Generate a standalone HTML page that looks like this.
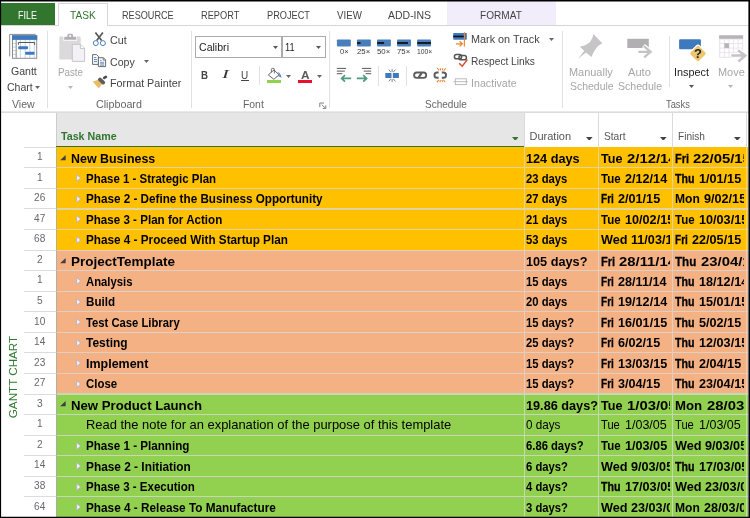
<!DOCTYPE html>
<html><head><meta charset="utf-8"><title>Project</title>
<style>
html,body{margin:0;padding:0;background:#fff;}
body{width:750px;height:518px;position:relative;overflow:hidden;font-family:"Liberation Sans",sans-serif;}
.t{position:absolute;white-space:nowrap;transform-origin:left center;}
.r{position:absolute;}
.c{position:absolute;overflow:hidden;}
#all{position:absolute;left:0;top:0;width:750px;height:518px;will-change:transform;}
</style></head><body><div id="all">
<div class="r" style="left:0px;top:0px;width:750px;height:518px;background:#fff;"></div>
<div class="r" style="left:1px;top:3px;width:54px;height:23px;background:#31752f;"></div>
<div class="t" style="left:18.30px;top:7.83px;font-size:11.8px;line-height:14.16px;color:#fff;transform:scaleX(0.7624);">FILE</div>
<div class="r" style="left:447px;top:1px;width:109px;height:24px;background:#f2edfa;"></div>
<div class="r" style="left:1px;top:25px;width:748px;height:1px;background:#d6d6d6;"></div>
<div class="r" style="left:58px;top:3px;width:50px;height:23px;background:#fff;border:1px solid #d6d6d6;border-bottom:none;box-sizing:border-box"></div>
<div class="t" style="left:70.30px;top:7.83px;font-size:11.8px;line-height:14.16px;color:#31752f;transform:scaleX(0.8582);">TASK</div>
<div class="t" style="left:122.30px;top:7.83px;font-size:11.8px;line-height:14.16px;color:#444;transform:scaleX(0.7730);">RESOURCE</div>
<div class="t" style="left:201.00px;top:7.83px;font-size:11.8px;line-height:14.16px;color:#444;transform:scaleX(0.7823);">REPORT</div>
<div class="t" style="left:266.50px;top:7.83px;font-size:11.8px;line-height:14.16px;color:#444;transform:scaleX(0.7808);">PROJECT</div>
<div class="t" style="left:336.80px;top:7.83px;font-size:11.8px;line-height:14.16px;color:#444;transform:scaleX(0.8224);">VIEW</div>
<div class="t" style="left:387.60px;top:7.83px;font-size:11.8px;line-height:14.16px;color:#444;transform:scaleX(0.8884);">ADD-INS</div>
<div class="t" style="left:479.80px;top:7.83px;font-size:11.8px;line-height:14.16px;color:#444;transform:scaleX(0.8541);">FORMAT</div>
<div class="r" style="left:1px;top:111px;width:748px;height:1px;background:#e9e9e9;"></div>
<div class="r" style="left:47px;top:31px;width:1px;height:77px;background:#e1e1e1;"></div>
<div class="r" style="left:191px;top:31px;width:1px;height:77px;background:#e1e1e1;"></div>
<div class="r" style="left:329px;top:31px;width:1px;height:77px;background:#e1e1e1;"></div>
<div class="r" style="left:562px;top:31px;width:1px;height:77px;background:#e1e1e1;"></div>
<div class="r" style="left:669px;top:36px;width:1px;height:51px;background:#e1e1e1;"></div>
<div class="r" style="left:259px;top:66px;width:1px;height:19px;background:#e1e1e1;"></div>
<div class="r" style="left:378px;top:66px;width:1px;height:20px;background:#e1e1e1;"></div>
<div class="r" style="left:406px;top:66px;width:1px;height:20px;background:#e1e1e1;"></div>
<div class="t" style="left:10.70px;top:64.32px;font-size:11.6px;line-height:13.92px;color:#444;transform:scaleX(0.9094);">Gantt</div>
<div class="t" style="left:6.70px;top:79.72px;font-size:11.6px;line-height:13.92px;color:#444;transform:scaleX(0.9095);">Chart</div>
<svg class="r" style="left:35.00px;top:86.00px" width="5" height="3" viewBox="0 0 5 3"><path d="M0 0H5L2.5 3Z" fill="#666"/></svg>
<div class="t" style="left:12.00px;top:97.02px;font-size:11.6px;line-height:13.92px;color:#666;transform:scaleX(0.9104);">View</div>
<div class="t" style="left:58.00px;top:64.52px;font-size:11.6px;line-height:13.92px;color:#a6a6a6;transform:scaleX(0.8428);">Paste</div>
<svg class="r" style="left:68.00px;top:85.50px" width="5" height="3" viewBox="0 0 5 3"><path d="M0 0H5L2.5 3Z" fill="#b5b5b5"/></svg>
<div class="t" style="left:110.00px;top:33.02px;font-size:11.6px;line-height:13.92px;color:#444;transform:scaleX(0.9251);">Cut</div>
<div class="t" style="left:110.00px;top:54.92px;font-size:11.6px;line-height:13.92px;color:#444;transform:scaleX(0.9121);">Copy</div>
<svg class="r" style="left:143.70px;top:60.00px" width="5" height="3" viewBox="0 0 5 3"><path d="M0 0H5L2.5 3Z" fill="#666"/></svg>
<div class="t" style="left:110.00px;top:75.72px;font-size:11.6px;line-height:13.92px;color:#444;transform:scaleX(0.9294);">Format Painter</div>
<div class="t" style="left:96.00px;top:97.02px;font-size:11.6px;line-height:13.92px;color:#666;transform:scaleX(0.9244);">Clipboard</div>
<div class="r" style="left:195px;top:36px;width:87px;height:22px;border:1px solid #ababab;box-sizing:border-box;background:#fff"></div>
<div class="r" style="left:282px;top:36px;width:44px;height:22px;border:1px solid #ababab;box-sizing:border-box;background:#fff"></div>
<div class="t" style="left:198.60px;top:40.02px;font-size:11.6px;line-height:13.92px;color:#222;transform:scaleX(0.9125);">Calibri</div>
<svg class="r" style="left:273.00px;top:46.00px" width="5" height="3" viewBox="0 0 5 3"><path d="M0 0H5L2.5 3Z" fill="#555"/></svg>
<div class="t" style="left:285.00px;top:40.02px;font-size:11.6px;line-height:13.92px;color:#222;transform:scaleX(0.7972);">11</div>
<svg class="r" style="left:316.20px;top:46.00px" width="5" height="3" viewBox="0 0 5 3"><path d="M0 0H5L2.5 3Z" fill="#555"/></svg>
<div class="t" style="left:201.00px;top:68.52px;font-size:11.5px;line-height:13.80px;color:#444;font-weight:bold;transform:scaleX(0.8428);">B</div>
<div class="t" style="left:221.80px;top:67.28px;font-size:12.8px;line-height:15.36px;color:#333;font-style:italic;transform:scaleX(1.6310);font-family:'Liberation Serif',serif;">I</div>
<div class="t" style="left:241.40px;top:68.59px;font-size:11px;line-height:13.20px;color:#444;transform:scaleX(0.9063);">U</div>
<div class="r" style="left:241px;top:80px;width:8px;height:1px;background:#444;"></div>
<div class="r" style="left:266.5px;top:79.5px;width:14.5px;height:3.5px;background:#92d050;"></div>
<svg class="r" style="left:286.10px;top:74.80px" width="5" height="3" viewBox="0 0 5 3"><path d="M0 0H5L2.5 3Z" fill="#666"/></svg>
<div class="t" style="left:300.70px;top:68.32px;font-size:11.6px;line-height:13.92px;color:#5a5a5a;font-weight:bold;transform:scaleX(1.0266);">A</div>
<div class="r" style="left:297.5px;top:79.5px;width:14.5px;height:3.5px;background:#e8112d;"></div>
<svg class="r" style="left:317.00px;top:74.80px" width="5" height="3" viewBox="0 0 5 3"><path d="M0 0H5L2.5 3Z" fill="#666"/></svg>
<div class="t" style="left:242.60px;top:97.02px;font-size:11.6px;line-height:13.92px;color:#666;transform:scaleX(0.8961);">Font</div>
<div class="t" style="left:424.60px;top:97.02px;font-size:11.6px;line-height:13.92px;color:#666;transform:scaleX(0.8641);">Schedule</div>
<div class="t" style="left:665.90px;top:97.02px;font-size:11.6px;line-height:13.92px;color:#666;transform:scaleX(0.8027);">Tasks</div>
<div class="t" style="left:339.60px;top:48.17px;font-size:7.0px;line-height:8.40px;color:#3a3a3a;transform:scaleX(1.0775);">0×</div>
<div class="t" style="left:357.35px;top:48.17px;font-size:7.0px;line-height:8.40px;color:#3a3a3a;transform:scaleX(1.1116);">25×</div>
<div class="t" style="left:377.40px;top:48.17px;font-size:7.0px;line-height:8.40px;color:#3a3a3a;transform:scaleX(1.1116);">50×</div>
<div class="t" style="left:397.45px;top:48.17px;font-size:7.0px;line-height:8.40px;color:#3a3a3a;transform:scaleX(1.1116);">75×</div>
<div class="t" style="left:416.50px;top:48.17px;font-size:7.0px;line-height:8.40px;color:#3a3a3a;transform:scaleX(0.9640);">100×</div>
<svg class="r" style="left:0;top:0" width="750" height="60" viewBox="0 0 750 60"><rect x="336.90" y="39.5" width="13.9" height="6.9" rx="0.8" fill="#4a7ebb"/><rect x="356.95" y="39.5" width="13.9" height="6.9" rx="0.8" fill="#4a7ebb"/><rect x="357.05" y="42.05" width="3.5" height="1.85" fill="#151515"/><rect x="377.00" y="39.5" width="13.9" height="6.9" rx="0.8" fill="#4a7ebb"/><rect x="377.10" y="42.05" width="7" height="1.85" fill="#151515"/><rect x="397.05" y="39.5" width="13.9" height="6.9" rx="0.8" fill="#4a7ebb"/><rect x="397.15" y="42.05" width="10.8" height="1.85" fill="#151515"/><rect x="417.10" y="39.5" width="13.9" height="6.9" rx="0.8" fill="#4a7ebb"/><rect x="417.20" y="42.05" width="13.8" height="1.85" fill="#151515"/></svg>
<div class="t" style="left:471.30px;top:32.22px;font-size:11.6px;line-height:13.92px;color:#444;transform:scaleX(0.9348);">Mark on Track</div>
<svg class="r" style="left:548.70px;top:38.00px" width="5" height="3" viewBox="0 0 5 3"><path d="M0 0H5L2.5 3Z" fill="#666"/></svg>
<div class="t" style="left:471.30px;top:54.32px;font-size:11.6px;line-height:13.92px;color:#444;transform:scaleX(0.8770);">Respect Links</div>
<div class="t" style="left:471.30px;top:75.72px;font-size:11.6px;line-height:13.92px;color:#a6a6a6;transform:scaleX(0.9204);">Inactivate</div>
<div class="t" style="left:568.90px;top:64.72px;font-size:11.6px;line-height:13.92px;color:#a6a6a6;transform:scaleX(0.9435);">Manually</div>
<div class="t" style="left:569.60px;top:79.42px;font-size:11.6px;line-height:13.92px;color:#a6a6a6;transform:scaleX(0.9013);">Schedule</div>
<div class="t" style="left:628.40px;top:64.72px;font-size:11.6px;line-height:13.92px;color:#a6a6a6;transform:scaleX(0.9554);">Auto</div>
<div class="t" style="left:617.80px;top:79.42px;font-size:11.6px;line-height:13.92px;color:#a6a6a6;transform:scaleX(0.9117);">Schedule</div>
<div class="t" style="left:674.00px;top:64.72px;font-size:11.6px;line-height:13.92px;color:#222;transform:scaleX(0.9358);">Inspect</div>
<svg class="r" style="left:689.20px;top:84.50px" width="5" height="3" viewBox="0 0 5 3"><path d="M0 0H5L2.5 3Z" fill="#555"/></svg>
<div class="t" style="left:717.60px;top:64.72px;font-size:11.6px;line-height:13.92px;color:#a6a6a6;transform:scaleX(0.9448);">Move</div>
<svg class="r" style="left:727.80px;top:84.50px" width="5" height="3" viewBox="0 0 5 3"><path d="M0 0H5L2.5 3Z" fill="#b5b5b5"/></svg>
<svg class="r" style="left:0;top:0" width="750" height="112" viewBox="0 0 750 112">
<!-- Gantt chart icon -->
<g>
<path d="M9.7 56.5V34.4H35.6" fill="none" stroke="#8a8a8a" stroke-width="1"/>
<rect x="12.5" y="35.8" width="24.2" height="22.5" fill="#fff" stroke="#8c8c8c" stroke-width="1"/>
<rect x="12" y="35.3" width="25.2" height="4.6" fill="#3f79bd"/>
<g stroke="#b7cfea" stroke-width="0.9"><path d="M20.4 40V58M25.2 40V58M29.8 40V58M34.2 40V58"/><path d="M13 43.4H16M13 47.1H16M13 50.7H16M13 54.4H16"/></g>
<path d="M16.2 40V58" stroke="#9a9a9a" stroke-width="1.2"/>
<path d="M18.4 44.8V42.5H34.6V44.8" fill="none" stroke="#555" stroke-width="1"/>
<rect x="18.2" y="46.2" width="9.8" height="3" rx="0.8" fill="#3f79bd"/>
<rect x="25.2" y="51.7" width="9.3" height="3" rx="0.8" fill="#3f79bd"/>
</g>
<!-- Paste icon -->
<g>
<rect x="59.3" y="36.5" width="21.4" height="23.1" rx="1.2" fill="#dcd9dc"/>
<rect x="63.4" y="36" width="13.6" height="4.7" fill="#fff"/>
<path d="M64.2 39.8V37.4q0-.6.6-.6H67.3V35.5q0-1.8 1.6-1.8H71.5q1.6 0 1.6 1.8V36.8H75.7q.6 0 .6.6V39.8Z" fill="#b3b0b3"/>
<circle cx="70.2" cy="36" r="1.1" fill="#fff"/>
<path d="M72.3 44.3H80.6L84.6 48.3V61.4H72.3Z" fill="#f4f1f6" stroke="#c3bfc5" stroke-width="0.9"/>
<path d="M80.4 44.5V48.5H84.4" fill="#fff" stroke="#c3bfc5" stroke-width="0.9"/>
</g>
<!-- Scissors -->
<g fill="none">
<path d="M95.4 32.4L101.6 40.6M102.9 32.4L96.7 40.6" stroke="#585858" stroke-width="1.7"/>
<circle cx="95.8" cy="43.1" r="2.5" stroke="#3f79bd" stroke-width="0.95"/>
<circle cx="102.9" cy="43.1" r="2.5" stroke="#3f79bd" stroke-width="0.95"/>
</g>
<!-- Copy -->
<g>
<path d="M92.6 54.6H96.6L98.4 56.4V64.4H92.6Z" fill="#fff" stroke="#5a5a5a" stroke-width="0.9"/>
<path d="M94 57.6H96.4M94 59.6H97M94 61.6H97" stroke="#3f79bd" stroke-width="0.9"/>
<path d="M98.4 57.7H103.4L105.6 59.9V66.6H98.4Z" fill="#fff" stroke="#5a5a5a" stroke-width="0.9"/>
<path d="M103.2 57.9V60.1H105.4" fill="none" stroke="#5a5a5a" stroke-width="0.8"/>
<path d="M100 60.4H101.6M100 62.3H104.2M100 63.8H104.2M100 65.2H104.2" stroke="#3f79bd" stroke-width="0.8"/>
</g>
<!-- Format painter -->
<g>
<path d="M92.8 81.8L99.6 79L102.8 83.2L98.6 88.3Z" fill="#e9bb66"/>
<path d="M99.9 79.4L103.3 82.6" stroke="#5c5c5c" stroke-width="3.7" stroke-linecap="round"/>
<path d="M104.2 77.8L105.9 76.8" stroke="#4a4a4a" stroke-width="2.6" stroke-linecap="round"/>
</g>
<!-- fill bucket -->
<g>
<path d="M268.3 74.9L274 69.9L279 74.9L273.8 79.3Z" fill="#fff" stroke="#555" stroke-width="0.9" stroke-linejoin="round"/>
<path d="M271.4 72.2V69.2q0-.9 1.5-.9q1.5 0 1.5 .9V73.4" fill="none" stroke="#555" stroke-width="0.8"/>
<path d="M277.4 71.9q3.8 1.2 4 6.4q-1.6-2.6-3.2-1.2L279.6 74.9Z" fill="#3f79bd"/>
</g>
<!-- outdent / indent -->
<g stroke="#585858" stroke-width="1">
<path d="M336.8 68.4H346M336.8 71.1H344.8M336.8 73.7H342.4"/>
<path d="M362 68.4H371.2M363.7 71.1H371.2M365.6 73.7H371.2"/>
</g>
<g fill="none" stroke="#4e9b7e" stroke-width="1.7">
<path d="M351.2 78.4H341.6M345 75.2L341.6 78.4L345 81.7"/>
<path d="M356.8 78.4H366.6M363.2 75.2L366.6 78.4L363.2 81.7"/>
</g>
<!-- split -->
<g>
<rect x="385.3" y="72.9" width="6.2" height="5.1" rx="0.6" fill="#3f79bd"/>
<rect x="392.8" y="72.9" width="6.1" height="5.1" rx="0.6" fill="#3f79bd"/>
<path d="M392.1 72V69M390.9 72.2L388.8 69.6M393.3 72.2L395.4 69.6M392.1 79V82M390.9 78.8L388.8 81.4M393.3 78.8L395.4 81.4" stroke="#6e6e6e" stroke-width="0.85"/>
</g>
<!-- link -->
<g fill="none" stroke="#5c5c5c" stroke-width="1.8">
<rect x="414.1" y="72.5" width="12.1" height="5.3" rx="2.65"/>
<path d="M418.7 77.4L421.7 72.9" stroke-width="2.2"/>
</g>
<!-- unlink -->
<g fill="none">
<path d="M438.6 72.55H437.05a2.6 2.6 0 0 0 0 5.2H438.6M441.8 72.55H443.45a2.6 2.6 0 0 1 0 5.2H441.8" stroke="#5c5c5c" stroke-width="1.9"/>
<path d="M440.6 70.3L440.2 68M439.2 70.5L437.2 68.1M442.3 70.3L442.8 68.1M443.8 70.6L445.6 68.3M440.4 79.9L440 82.2M438.9 79.8L436.9 82.2M442 79.9L442.5 82.2M443.4 79.7L445.2 82.1" stroke="#f0852d" stroke-width="1.05"/>
</g>
<!-- mark on track -->
<g>
<rect x="453.2" y="32.9" width="13.6" height="6.8" rx="0.6" fill="#3f79bd"/>
<rect x="453.2" y="35.6" width="10.8" height="1.7" fill="#111"/>
<path d="M464.4 32.3V46.6" stroke="#f0852d" stroke-width="1.2"/>
<path d="M456 43.8H462M459.6 41.2L462.3 43.8L459.6 46.4" fill="none" stroke="#f0852d" stroke-width="1.3"/>
</g>
<!-- respect links -->
<g fill="none">
<rect x="454.4" y="54.6" width="7.2" height="4.2" rx="2.1" stroke="#555" stroke-width="1.5"/>
<rect x="459" y="55.6" width="7.4" height="4.2" rx="2.1" stroke="#555" stroke-width="1.5"/>
<path d="M459.2 63.2L462.2 66.2L467.4 59.6" stroke="#d8482a" stroke-width="1.5"/>
</g>
<!-- inactivate -->
<g fill="none" stroke="#b4b4b4" stroke-width="0.9">
<rect x="455.3" y="78.8" width="11" height="5.8"/>
<path d="M453.2 81.7H467.8"/>
</g>
<!-- pin -->
<path d="M593.4 34.1L602.3 43.2L598.6 45.5L595.6 48.9L593.1 53.3L591.5 56.9L586 52.6L578.2 58.7L584.2 50.8L579.9 46.7L585.2 45.2L590 42.2L592.3 38.1Z" fill="#c6c4c6"/>
<!-- auto schedule -->
<g>
<rect x="627.3" y="38.8" width="21.5" height="9.2" fill="#b1afb1"/>
<path d="M638 51.8H650M643.4 45.6L651 51.8L643.8 57.8" fill="none" stroke="#fff" stroke-width="4.4"/>
<path d="M638.4 51.8H650M643.8 46.2L650.6 51.8L644.2 57.4" fill="none" stroke="#c4c2c4" stroke-width="2.3"/>
</g>
<!-- inspect -->
<g>
<rect x="679.1" y="39.2" width="21.8" height="10.1" rx="1" fill="#3f79bd"/>
<rect x="-6.5" y="-6.5" width="13" height="13" rx="2.2" transform="translate(698 53.5) rotate(45)" fill="#ecc76f" stroke="#fff" stroke-width="1.2"/>
<text x="698" y="58.2" font-family="Liberation Sans, sans-serif" font-weight="bold" font-size="13" text-anchor="middle" fill="#222">?</text>
</g>
<!-- move -->
<g>
<rect x="719.1" y="35.3" width="24" height="22.6" fill="#e9e5ea"/>
<rect x="719.1" y="35.3" width="24" height="3.4" fill="#b6b4b6"/>
<g fill="#fff">
<rect x="720.3" y="39.6" width="3.6" height="3.4"/><rect x="724.9" y="39.6" width="3.6" height="3.4"/><rect x="729.5" y="39.6" width="3.6" height="3.4"/><rect x="734.1" y="39.6" width="3.6" height="3.4"/><rect x="738.7" y="39.6" width="3.6" height="3.4"/>
<rect x="720.3" y="44" width="3.6" height="3.6"/><rect x="729.5" y="44" width="3.6" height="3.6"/><rect x="734.1" y="44" width="3.6" height="3.6"/><rect x="738.7" y="44" width="3.6" height="3.6"/>
<rect x="720.3" y="48.6" width="3.6" height="3.6"/><rect x="724.9" y="48.6" width="3.6" height="3.6"/><rect x="729.5" y="48.6" width="3.6" height="3.6"/><rect x="734.1" y="48.6" width="3.6" height="3.6"/><rect x="738.7" y="48.6" width="3.6" height="3.6"/>
<rect x="720.3" y="53.2" width="3.6" height="3.6"/><rect x="724.9" y="53.2" width="3.6" height="3.6"/><rect x="729.5" y="53.2" width="3.6" height="3.6"/><rect x="734.1" y="53.2" width="3.6" height="3.6"/><rect x="738.7" y="53.2" width="3.6" height="3.6"/>
</g>
<rect x="724.4" y="43.3" width="4.6" height="4.8" fill="#b6b4b6"/>
<path d="M731 55.5H744M737.6 49.6L745.6 55.5L738 61.8" fill="none" stroke="#fff" stroke-width="4.6"/>
<path d="M731.3 55.5H744.4M738 50.2L745.2 55.5L738.4 61.4" fill="none" stroke="#c6c4c6" stroke-width="2.6"/>
</g>
<!-- dialog launcher -->
<g fill="none" stroke="#777" stroke-width="0.9">
<path d="M319.8 107.2V103H324"/>
<path d="M321.8 104.8L325.6 108.2M325.8 105.4V108.4H322.8"/>
</g>
</svg>

<div class="r" style="left:1px;top:112px;width:23px;height:405px;background:#fff;"></div>
<div class="r" style="left:56px;top:112px;width:468px;height:34px;background:#e6e6e6;"></div>
<div class="r" style="left:56px;top:112px;width:1px;height:34px;background:#cdcdcd;"></div>
<div class="r" style="left:56px;top:146px;width:468px;height:1.5px;background:#31752f;"></div>
<div class="r" style="left:524px;top:146.5px;width:224px;height:0.8000000000000114px;background:#c8c8c8;"></div>
<div class="t" style="left:61.00px;top:130.09px;font-size:11px;line-height:13.20px;color:#31752f;font-weight:bold;transform:scaleX(0.9708);">Task Name</div>
<div class="t" style="left:529.50px;top:130.09px;font-size:11px;line-height:13.20px;color:#555;">Duration</div>
<div class="t" style="left:603.50px;top:130.09px;font-size:11px;line-height:13.20px;color:#555;transform:scaleX(0.9255);">Start</div>
<div class="t" style="left:677.50px;top:130.09px;font-size:11px;line-height:13.20px;color:#555;transform:scaleX(0.9201);">Finish</div>
<svg class="r" style="left:511.90px;top:136.70px" width="6.6" height="3.8" viewBox="0 0 6.6 3.8"><path d="M0 0H6.6L3.3 3.8Z" fill="#31752f"/></svg>
<svg class="r" style="left:586.00px;top:136.70px" width="6.6" height="3.8" viewBox="0 0 6.6 3.8"><path d="M0 0H6.6L3.3 3.8Z" fill="#444"/></svg>
<svg class="r" style="left:660.00px;top:136.70px" width="6.6" height="3.8" viewBox="0 0 6.6 3.8"><path d="M0 0H6.6L3.3 3.8Z" fill="#444"/></svg>
<svg class="r" style="left:734.00px;top:136.70px" width="6.6" height="3.8" viewBox="0 0 6.6 3.8"><path d="M0 0H6.6L3.3 3.8Z" fill="#444"/></svg>
<div class="r" style="left:524px;top:112px;width:1px;height:35px;background:#dadada;"></div>
<div class="r" style="left:598px;top:112px;width:1px;height:35px;background:#dadada;"></div>
<div class="r" style="left:672px;top:112px;width:1px;height:35px;background:#dadada;"></div>
<div class="r" style="left:746px;top:112px;width:1px;height:35px;background:#dadada;"></div>
<div class="r" style="left:1px;top:112px;width:748px;height:1px;background:#dcdcdc;"></div>
<div class="r" style="left:56px;top:147.3px;width:692px;height:20.560000000000002px;background:#ffc000;"></div>
<div class="r" style="left:24px;top:146.8px;width:32px;height:1.0px;background:#dcdcdc;"></div>
<div class="r" style="left:524px;top:147.3px;width:1.2000000000000455px;height:20.560000000000002px;background:#e2d3a3;"></div>
<div class="r" style="left:598px;top:147.3px;width:1.2000000000000455px;height:20.560000000000002px;background:#e2d3a3;"></div>
<div class="r" style="left:672px;top:147.3px;width:1.2000000000000455px;height:20.560000000000002px;background:#e2d3a3;"></div>
<div class="r" style="left:746px;top:147.3px;width:1.2000000000000455px;height:20.560000000000002px;background:#e2d3a3;"></div>
<div class="t" style="left:36.79px;top:150.09px;font-size:11px;line-height:13.20px;color:#6a666c;transform:scaleX(0.9200);">1</div>
<svg class="r" style="left:60.3px;top:154.70px" width="6" height="6" viewBox="0 0 6 6"><path d="M5.7 0V5.2H0.1Z" fill="#3f3f4a"/></svg>
<div class="c" style="left:56px;top:147.30px;width:468px;height:20.56px;"><div class="t" style="left:14.900000000000006px;top:3.61px;font-size:13.3px;line-height:15.96px;color:#000;font-weight:bold;transform:scaleX(0.9347)">New Business</div></div>
<div class="c" style="left:525px;top:147.30px;width:73px;height:20.56px;"><div class="t" style="left:1.0px;top:3.61px;font-size:13.3px;line-height:15.96px;color:#000;font-weight:bold;transform:scaleX(0.9549)">124 days</div></div>
<div class="c" style="left:599px;top:147.30px;width:70.5px;height:20.56px;"><div class="t" style="left:2.10px;top:3.61px;font-size:13.3px;line-height:15.96px;color:#000;font-weight:bold;transform:scaleX(0.946);">Tue</div><div class="t" style="left:28.03px;top:3.61px;font-size:13.3px;line-height:15.96px;color:#000;font-weight:bold;transform:scaleX(1.117)">2/12/14</div></div>
<div class="c" style="left:673px;top:147.30px;width:70.79999999999995px;height:20.56px;"><div class="t" style="left:2.10px;top:3.61px;font-size:13.3px;line-height:15.96px;color:#000;font-weight:bold;transform:scaleX(0.829);-webkit-text-stroke:0.3px #000;">Fri</div><div class="t" style="left:20.48px;top:3.61px;font-size:13.3px;line-height:15.96px;color:#000;font-weight:bold;transform:scaleX(1.117)">22/05/15</div></div>
<div class="r" style="left:56px;top:167.86px;width:692px;height:20.559999999999974px;background:#ffc000;"></div>
<div class="r" style="left:24px;top:167.36px;width:32px;height:1.0px;background:#dcdcdc;"></div>
<div class="r" style="left:56px;top:167.26px;width:692px;height:1.200000000000017px;background:#e2d3a3;"></div>
<div class="r" style="left:524px;top:167.86px;width:1.2000000000000455px;height:20.559999999999974px;background:#e2d3a3;"></div>
<div class="r" style="left:598px;top:167.86px;width:1.2000000000000455px;height:20.559999999999974px;background:#e2d3a3;"></div>
<div class="r" style="left:672px;top:167.86px;width:1.2000000000000455px;height:20.559999999999974px;background:#e2d3a3;"></div>
<div class="r" style="left:746px;top:167.86px;width:1.2000000000000455px;height:20.559999999999974px;background:#e2d3a3;"></div>
<div class="t" style="left:36.79px;top:170.65px;font-size:11px;line-height:13.20px;color:#6a666c;transform:scaleX(0.9200);">1</div>
<svg class="r" style="left:75.6px;top:174.26px" width="6" height="8" viewBox="0 0 6 8"><path d="M0.7 0.6L4.6 4L0.7 7.4Z" fill="#f4f4fb" stroke="#a9a9c4" stroke-width="0.7"/></svg>
<div class="c" style="left:56px;top:167.86px;width:468px;height:20.56px;"><div class="t" style="left:29.5px;top:3.86px;font-size:12.4px;line-height:14.88px;color:#000;font-weight:bold;transform:scaleX(0.9255)">Phase 1 - Strategic Plan</div></div>
<div class="c" style="left:525px;top:167.86px;width:73px;height:20.56px;"><div class="t" style="left:1.3px;top:3.86px;font-size:12.4px;line-height:14.88px;color:#000;font-weight:bold;transform:scaleX(0.9074)">23 days</div></div>
<div class="c" style="left:599px;top:167.86px;width:70.5px;height:20.56px;"><div class="t" style="left:2.10px;top:3.86px;font-size:12.4px;line-height:14.88px;color:#000;font-weight:bold;transform:scaleX(0.927);">Tue</div><div class="t" style="left:25.80px;top:3.86px;font-size:12.4px;line-height:14.88px;color:#000;font-weight:bold;transform:scaleX(1.020)">2/12/14</div></div>
<div class="c" style="left:673px;top:167.86px;width:70.79999999999995px;height:20.56px;"><div class="t" style="left:2.10px;top:3.86px;font-size:12.4px;line-height:14.88px;color:#000;font-weight:bold;transform:scaleX(0.857);-webkit-text-stroke:0.3px #000;">Thu</div><div class="t" style="left:25.80px;top:3.86px;font-size:12.4px;line-height:14.88px;color:#000;font-weight:bold;transform:scaleX(1.020)">1/01/15</div></div>
<div class="r" style="left:56px;top:188.42px;width:692px;height:20.560000000000002px;background:#ffc000;"></div>
<div class="r" style="left:24px;top:187.92px;width:32px;height:1.0px;background:#dcdcdc;"></div>
<div class="r" style="left:56px;top:187.82px;width:692px;height:1.200000000000017px;background:#e2d3a3;"></div>
<div class="r" style="left:524px;top:188.42px;width:1.2000000000000455px;height:20.560000000000002px;background:#e2d3a3;"></div>
<div class="r" style="left:598px;top:188.42px;width:1.2000000000000455px;height:20.560000000000002px;background:#e2d3a3;"></div>
<div class="r" style="left:672px;top:188.42px;width:1.2000000000000455px;height:20.560000000000002px;background:#e2d3a3;"></div>
<div class="r" style="left:746px;top:188.42px;width:1.2000000000000455px;height:20.560000000000002px;background:#e2d3a3;"></div>
<div class="t" style="left:33.97px;top:191.21px;font-size:11px;line-height:13.20px;color:#6a666c;transform:scaleX(0.9200);">26</div>
<svg class="r" style="left:75.6px;top:194.82px" width="6" height="8" viewBox="0 0 6 8"><path d="M0.7 0.6L4.6 4L0.7 7.4Z" fill="#f4f4fb" stroke="#a9a9c4" stroke-width="0.7"/></svg>
<div class="c" style="left:56px;top:188.42px;width:468px;height:20.56px;"><div class="t" style="left:29.5px;top:3.86px;font-size:12.4px;line-height:14.88px;color:#000;font-weight:bold;transform:scaleX(0.9441)">Phase 2 - Define the Business Opportunity</div></div>
<div class="c" style="left:525px;top:188.42px;width:73px;height:20.56px;"><div class="t" style="left:1.3px;top:3.86px;font-size:12.4px;line-height:14.88px;color:#000;font-weight:bold;transform:scaleX(0.9074)">27 days</div></div>
<div class="c" style="left:599px;top:188.42px;width:70.5px;height:20.56px;"><div class="t" style="left:2.10px;top:3.86px;font-size:12.4px;line-height:14.88px;color:#000;font-weight:bold;transform:scaleX(0.813);-webkit-text-stroke:0.3px #000;">Fri</div><div class="t" style="left:18.90px;top:3.86px;font-size:12.4px;line-height:14.88px;color:#000;font-weight:bold;transform:scaleX(1.020)">2/01/15</div></div>
<div class="c" style="left:673px;top:188.42px;width:70.79999999999995px;height:20.56px;"><div class="t" style="left:2.10px;top:3.86px;font-size:12.4px;line-height:14.88px;color:#000;font-weight:bold;transform:scaleX(0.973);">Mon</div><div class="t" style="left:31.10px;top:3.86px;font-size:12.4px;line-height:14.88px;color:#000;font-weight:bold;transform:scaleX(1.020)">9/02/15</div></div>
<div class="r" style="left:56px;top:208.98px;width:692px;height:20.560000000000002px;background:#ffc000;"></div>
<div class="r" style="left:24px;top:208.48px;width:32px;height:1.0px;background:#dcdcdc;"></div>
<div class="r" style="left:56px;top:208.38px;width:692px;height:1.200000000000017px;background:#e2d3a3;"></div>
<div class="r" style="left:524px;top:208.98px;width:1.2000000000000455px;height:20.560000000000002px;background:#e2d3a3;"></div>
<div class="r" style="left:598px;top:208.98px;width:1.2000000000000455px;height:20.560000000000002px;background:#e2d3a3;"></div>
<div class="r" style="left:672px;top:208.98px;width:1.2000000000000455px;height:20.560000000000002px;background:#e2d3a3;"></div>
<div class="r" style="left:746px;top:208.98px;width:1.2000000000000455px;height:20.560000000000002px;background:#e2d3a3;"></div>
<div class="t" style="left:33.97px;top:211.77px;font-size:11px;line-height:13.20px;color:#6a666c;transform:scaleX(0.9200);">47</div>
<svg class="r" style="left:75.6px;top:215.38px" width="6" height="8" viewBox="0 0 6 8"><path d="M0.7 0.6L4.6 4L0.7 7.4Z" fill="#f4f4fb" stroke="#a9a9c4" stroke-width="0.7"/></svg>
<div class="c" style="left:56px;top:208.98px;width:468px;height:20.56px;"><div class="t" style="left:29.5px;top:3.86px;font-size:12.4px;line-height:14.88px;color:#000;font-weight:bold;transform:scaleX(0.9365)">Phase 3 - Plan for Action</div></div>
<div class="c" style="left:525px;top:208.98px;width:73px;height:20.56px;"><div class="t" style="left:1.3px;top:3.86px;font-size:12.4px;line-height:14.88px;color:#000;font-weight:bold;transform:scaleX(0.9074)">21 days</div></div>
<div class="c" style="left:599px;top:208.98px;width:70.5px;height:20.56px;"><div class="t" style="left:2.10px;top:3.86px;font-size:12.4px;line-height:14.88px;color:#000;font-weight:bold;transform:scaleX(0.927);">Tue</div><div class="t" style="left:25.80px;top:3.86px;font-size:12.4px;line-height:14.88px;color:#000;font-weight:bold;transform:scaleX(1.020)">10/02/15</div></div>
<div class="c" style="left:673px;top:208.98px;width:70.79999999999995px;height:20.56px;"><div class="t" style="left:2.10px;top:3.86px;font-size:12.4px;line-height:14.88px;color:#000;font-weight:bold;transform:scaleX(0.927);">Tue</div><div class="t" style="left:25.80px;top:3.86px;font-size:12.4px;line-height:14.88px;color:#000;font-weight:bold;transform:scaleX(1.020)">10/03/15</div></div>
<div class="r" style="left:56px;top:229.54px;width:692px;height:20.560000000000002px;background:#ffc000;"></div>
<div class="r" style="left:24px;top:229.04px;width:32px;height:1.0px;background:#dcdcdc;"></div>
<div class="r" style="left:56px;top:228.94px;width:692px;height:1.1999999999999886px;background:#e2d3a3;"></div>
<div class="r" style="left:524px;top:229.54px;width:1.2000000000000455px;height:20.560000000000002px;background:#e2d3a3;"></div>
<div class="r" style="left:598px;top:229.54px;width:1.2000000000000455px;height:20.560000000000002px;background:#e2d3a3;"></div>
<div class="r" style="left:672px;top:229.54px;width:1.2000000000000455px;height:20.560000000000002px;background:#e2d3a3;"></div>
<div class="r" style="left:746px;top:229.54px;width:1.2000000000000455px;height:20.560000000000002px;background:#e2d3a3;"></div>
<div class="t" style="left:33.97px;top:232.33px;font-size:11px;line-height:13.20px;color:#6a666c;transform:scaleX(0.9200);">68</div>
<svg class="r" style="left:75.6px;top:235.94px" width="6" height="8" viewBox="0 0 6 8"><path d="M0.7 0.6L4.6 4L0.7 7.4Z" fill="#f4f4fb" stroke="#a9a9c4" stroke-width="0.7"/></svg>
<div class="c" style="left:56px;top:229.54px;width:468px;height:20.56px;"><div class="t" style="left:29.5px;top:3.86px;font-size:12.4px;line-height:14.88px;color:#000;font-weight:bold;transform:scaleX(0.9463)">Phase 4 - Proceed With Startup Plan</div></div>
<div class="c" style="left:525px;top:229.54px;width:73px;height:20.56px;"><div class="t" style="left:1.3px;top:3.86px;font-size:12.4px;line-height:14.88px;color:#000;font-weight:bold;transform:scaleX(0.9074)">53 days</div></div>
<div class="c" style="left:599px;top:229.54px;width:70.5px;height:20.56px;"><div class="t" style="left:2.10px;top:3.86px;font-size:12.4px;line-height:14.88px;color:#000;font-weight:bold;transform:scaleX(1.024);">Wed</div><div class="t" style="left:32.20px;top:3.86px;font-size:12.4px;line-height:14.88px;color:#000;font-weight:bold;transform:scaleX(1.020)">11/03/15</div></div>
<div class="c" style="left:673px;top:229.54px;width:70.79999999999995px;height:20.56px;"><div class="t" style="left:2.10px;top:3.86px;font-size:12.4px;line-height:14.88px;color:#000;font-weight:bold;transform:scaleX(0.813);-webkit-text-stroke:0.3px #000;">Fri</div><div class="t" style="left:18.90px;top:3.86px;font-size:12.4px;line-height:14.88px;color:#000;font-weight:bold;transform:scaleX(1.020)">22/05/15</div></div>
<div class="r" style="left:56px;top:250.1px;width:692px;height:20.56000000000003px;background:#f4b183;"></div>
<div class="r" style="left:24px;top:249.6px;width:32px;height:1.0px;background:#dcdcdc;"></div>
<div class="r" style="left:56px;top:249.5px;width:692px;height:1.1999999999999886px;background:#e0cfc4;"></div>
<div class="r" style="left:524px;top:250.1px;width:1.2000000000000455px;height:20.56000000000003px;background:#e0cfc4;"></div>
<div class="r" style="left:598px;top:250.1px;width:1.2000000000000455px;height:20.56000000000003px;background:#e0cfc4;"></div>
<div class="r" style="left:672px;top:250.1px;width:1.2000000000000455px;height:20.56000000000003px;background:#e0cfc4;"></div>
<div class="r" style="left:746px;top:250.1px;width:1.2000000000000455px;height:20.56000000000003px;background:#e0cfc4;"></div>
<div class="t" style="left:36.79px;top:252.89px;font-size:11px;line-height:13.20px;color:#6a666c;transform:scaleX(0.9200);">2</div>
<svg class="r" style="left:60.3px;top:257.50px" width="6" height="6" viewBox="0 0 6 6"><path d="M5.7 0V5.2H0.1Z" fill="#3f3f4a"/></svg>
<div class="c" style="left:56px;top:250.10px;width:468px;height:20.56px;"><div class="t" style="left:14.900000000000006px;top:3.61px;font-size:13.3px;line-height:15.96px;color:#000;font-weight:bold;transform:scaleX(1.0149)">ProjectTemplate</div></div>
<div class="c" style="left:525px;top:250.10px;width:73px;height:20.56px;"><div class="t" style="left:1.0px;top:3.61px;font-size:13.3px;line-height:15.96px;color:#000;font-weight:bold;transform:scaleX(0.9549)">105 days?</div></div>
<div class="c" style="left:599px;top:250.10px;width:70.5px;height:20.56px;"><div class="t" style="left:2.10px;top:3.61px;font-size:13.3px;line-height:15.96px;color:#000;font-weight:bold;transform:scaleX(0.829);-webkit-text-stroke:0.3px #000;">Fri</div><div class="t" style="left:20.48px;top:3.61px;font-size:13.3px;line-height:15.96px;color:#000;font-weight:bold;transform:scaleX(1.117)">28/11/14</div></div>
<div class="c" style="left:673px;top:250.10px;width:70.79999999999995px;height:20.56px;"><div class="t" style="left:2.10px;top:3.61px;font-size:13.3px;line-height:15.96px;color:#000;font-weight:bold;transform:scaleX(0.874);-webkit-text-stroke:0.3px #000;">Thu</div><div class="t" style="left:28.03px;top:3.61px;font-size:13.3px;line-height:15.96px;color:#000;font-weight:bold;transform:scaleX(1.117)">23/04/15</div></div>
<div class="r" style="left:56px;top:270.66px;width:692px;height:20.560000000000002px;background:#f4b183;"></div>
<div class="r" style="left:24px;top:270.16px;width:32px;height:1.0px;background:#dcdcdc;"></div>
<div class="r" style="left:56px;top:270.06px;width:692px;height:1.1999999999999886px;background:#e0cfc4;"></div>
<div class="r" style="left:524px;top:270.66px;width:1.2000000000000455px;height:20.560000000000002px;background:#e0cfc4;"></div>
<div class="r" style="left:598px;top:270.66px;width:1.2000000000000455px;height:20.560000000000002px;background:#e0cfc4;"></div>
<div class="r" style="left:672px;top:270.66px;width:1.2000000000000455px;height:20.560000000000002px;background:#e0cfc4;"></div>
<div class="r" style="left:746px;top:270.66px;width:1.2000000000000455px;height:20.560000000000002px;background:#e0cfc4;"></div>
<div class="t" style="left:36.79px;top:273.45px;font-size:11px;line-height:13.20px;color:#6a666c;transform:scaleX(0.9200);">1</div>
<svg class="r" style="left:75.6px;top:277.06px" width="6" height="8" viewBox="0 0 6 8"><path d="M0.7 0.6L4.6 4L0.7 7.4Z" fill="#f4f4fb" stroke="#a9a9c4" stroke-width="0.7"/></svg>
<div class="c" style="left:56px;top:270.66px;width:468px;height:20.56px;"><div class="t" style="left:29.5px;top:3.86px;font-size:12.4px;line-height:14.88px;color:#000;font-weight:bold;transform:scaleX(0.9110)">Analysis</div></div>
<div class="c" style="left:525px;top:270.66px;width:73px;height:20.56px;"><div class="t" style="left:1.3px;top:3.86px;font-size:12.4px;line-height:14.88px;color:#000;font-weight:bold;transform:scaleX(0.9074)">15 days</div></div>
<div class="c" style="left:599px;top:270.66px;width:70.5px;height:20.56px;"><div class="t" style="left:2.10px;top:3.86px;font-size:12.4px;line-height:14.88px;color:#000;font-weight:bold;transform:scaleX(0.813);-webkit-text-stroke:0.3px #000;">Fri</div><div class="t" style="left:18.90px;top:3.86px;font-size:12.4px;line-height:14.88px;color:#000;font-weight:bold;transform:scaleX(1.020)">28/11/14</div></div>
<div class="c" style="left:673px;top:270.66px;width:70.79999999999995px;height:20.56px;"><div class="t" style="left:2.10px;top:3.86px;font-size:12.4px;line-height:14.88px;color:#000;font-weight:bold;transform:scaleX(0.857);-webkit-text-stroke:0.3px #000;">Thu</div><div class="t" style="left:25.80px;top:3.86px;font-size:12.4px;line-height:14.88px;color:#000;font-weight:bold;transform:scaleX(1.020)">18/12/14</div></div>
<div class="r" style="left:56px;top:291.22px;width:692px;height:20.559999999999945px;background:#f4b183;"></div>
<div class="r" style="left:24px;top:290.72px;width:32px;height:1.0px;background:#dcdcdc;"></div>
<div class="r" style="left:56px;top:290.62px;width:692px;height:1.1999999999999886px;background:#e0cfc4;"></div>
<div class="r" style="left:524px;top:291.22px;width:1.2000000000000455px;height:20.559999999999945px;background:#e0cfc4;"></div>
<div class="r" style="left:598px;top:291.22px;width:1.2000000000000455px;height:20.559999999999945px;background:#e0cfc4;"></div>
<div class="r" style="left:672px;top:291.22px;width:1.2000000000000455px;height:20.559999999999945px;background:#e0cfc4;"></div>
<div class="r" style="left:746px;top:291.22px;width:1.2000000000000455px;height:20.559999999999945px;background:#e0cfc4;"></div>
<div class="t" style="left:36.79px;top:294.01px;font-size:11px;line-height:13.20px;color:#6a666c;transform:scaleX(0.9200);">5</div>
<svg class="r" style="left:75.6px;top:297.62px" width="6" height="8" viewBox="0 0 6 8"><path d="M0.7 0.6L4.6 4L0.7 7.4Z" fill="#f4f4fb" stroke="#a9a9c4" stroke-width="0.7"/></svg>
<div class="c" style="left:56px;top:291.22px;width:468px;height:20.56px;"><div class="t" style="left:29.5px;top:3.86px;font-size:12.4px;line-height:14.88px;color:#000;font-weight:bold;transform:scaleX(0.9382)">Build</div></div>
<div class="c" style="left:525px;top:291.22px;width:73px;height:20.56px;"><div class="t" style="left:1.3px;top:3.86px;font-size:12.4px;line-height:14.88px;color:#000;font-weight:bold;transform:scaleX(0.9074)">20 days</div></div>
<div class="c" style="left:599px;top:291.22px;width:70.5px;height:20.56px;"><div class="t" style="left:2.10px;top:3.86px;font-size:12.4px;line-height:14.88px;color:#000;font-weight:bold;transform:scaleX(0.813);-webkit-text-stroke:0.3px #000;">Fri</div><div class="t" style="left:18.90px;top:3.86px;font-size:12.4px;line-height:14.88px;color:#000;font-weight:bold;transform:scaleX(1.020)">19/12/14</div></div>
<div class="c" style="left:673px;top:291.22px;width:70.79999999999995px;height:20.56px;"><div class="t" style="left:2.10px;top:3.86px;font-size:12.4px;line-height:14.88px;color:#000;font-weight:bold;transform:scaleX(0.857);-webkit-text-stroke:0.3px #000;">Thu</div><div class="t" style="left:25.80px;top:3.86px;font-size:12.4px;line-height:14.88px;color:#000;font-weight:bold;transform:scaleX(1.020)">15/01/15</div></div>
<div class="r" style="left:56px;top:311.78px;width:692px;height:20.560000000000002px;background:#f4b183;"></div>
<div class="r" style="left:24px;top:311.28px;width:32px;height:1.0px;background:#dcdcdc;"></div>
<div class="r" style="left:56px;top:311.18px;width:692px;height:1.1999999999999886px;background:#e0cfc4;"></div>
<div class="r" style="left:524px;top:311.78px;width:1.2000000000000455px;height:20.560000000000002px;background:#e0cfc4;"></div>
<div class="r" style="left:598px;top:311.78px;width:1.2000000000000455px;height:20.560000000000002px;background:#e0cfc4;"></div>
<div class="r" style="left:672px;top:311.78px;width:1.2000000000000455px;height:20.560000000000002px;background:#e0cfc4;"></div>
<div class="r" style="left:746px;top:311.78px;width:1.2000000000000455px;height:20.560000000000002px;background:#e0cfc4;"></div>
<div class="t" style="left:33.97px;top:314.57px;font-size:11px;line-height:13.20px;color:#6a666c;transform:scaleX(0.9200);">10</div>
<svg class="r" style="left:75.6px;top:318.18px" width="6" height="8" viewBox="0 0 6 8"><path d="M0.7 0.6L4.6 4L0.7 7.4Z" fill="#f4f4fb" stroke="#a9a9c4" stroke-width="0.7"/></svg>
<div class="c" style="left:56px;top:311.78px;width:468px;height:20.56px;"><div class="t" style="left:29.5px;top:3.86px;font-size:12.4px;line-height:14.88px;color:#000;font-weight:bold;transform:scaleX(0.9087)">Test Case Library</div></div>
<div class="c" style="left:525px;top:311.78px;width:73px;height:20.56px;"><div class="t" style="left:1.3px;top:3.86px;font-size:12.4px;line-height:14.88px;color:#000;font-weight:bold;transform:scaleX(0.9074)">15 days?</div></div>
<div class="c" style="left:599px;top:311.78px;width:70.5px;height:20.56px;"><div class="t" style="left:2.10px;top:3.86px;font-size:12.4px;line-height:14.88px;color:#000;font-weight:bold;transform:scaleX(0.813);-webkit-text-stroke:0.3px #000;">Fri</div><div class="t" style="left:18.90px;top:3.86px;font-size:12.4px;line-height:14.88px;color:#000;font-weight:bold;transform:scaleX(1.020)">16/01/15</div></div>
<div class="c" style="left:673px;top:311.78px;width:70.79999999999995px;height:20.56px;"><div class="t" style="left:2.10px;top:3.86px;font-size:12.4px;line-height:14.88px;color:#000;font-weight:bold;transform:scaleX(0.857);-webkit-text-stroke:0.3px #000;">Thu</div><div class="t" style="left:25.80px;top:3.86px;font-size:12.4px;line-height:14.88px;color:#000;font-weight:bold;transform:scaleX(1.020)">5/02/15</div></div>
<div class="r" style="left:56px;top:332.34px;width:692px;height:20.560000000000002px;background:#f4b183;"></div>
<div class="r" style="left:24px;top:331.84px;width:32px;height:1.0px;background:#dcdcdc;"></div>
<div class="r" style="left:56px;top:331.74px;width:692px;height:1.1999999999999886px;background:#e0cfc4;"></div>
<div class="r" style="left:524px;top:332.34px;width:1.2000000000000455px;height:20.560000000000002px;background:#e0cfc4;"></div>
<div class="r" style="left:598px;top:332.34px;width:1.2000000000000455px;height:20.560000000000002px;background:#e0cfc4;"></div>
<div class="r" style="left:672px;top:332.34px;width:1.2000000000000455px;height:20.560000000000002px;background:#e0cfc4;"></div>
<div class="r" style="left:746px;top:332.34px;width:1.2000000000000455px;height:20.560000000000002px;background:#e0cfc4;"></div>
<div class="t" style="left:33.97px;top:335.13px;font-size:11px;line-height:13.20px;color:#6a666c;transform:scaleX(0.9200);">14</div>
<svg class="r" style="left:75.6px;top:338.74px" width="6" height="8" viewBox="0 0 6 8"><path d="M0.7 0.6L4.6 4L0.7 7.4Z" fill="#f4f4fb" stroke="#a9a9c4" stroke-width="0.7"/></svg>
<div class="c" style="left:56px;top:332.34px;width:468px;height:20.56px;"><div class="t" style="left:29.5px;top:3.86px;font-size:12.4px;line-height:14.88px;color:#000;font-weight:bold;transform:scaleX(0.9640)">Testing</div></div>
<div class="c" style="left:525px;top:332.34px;width:73px;height:20.56px;"><div class="t" style="left:1.3px;top:3.86px;font-size:12.4px;line-height:14.88px;color:#000;font-weight:bold;transform:scaleX(0.9074)">25 days?</div></div>
<div class="c" style="left:599px;top:332.34px;width:70.5px;height:20.56px;"><div class="t" style="left:2.10px;top:3.86px;font-size:12.4px;line-height:14.88px;color:#000;font-weight:bold;transform:scaleX(0.813);-webkit-text-stroke:0.3px #000;">Fri</div><div class="t" style="left:18.90px;top:3.86px;font-size:12.4px;line-height:14.88px;color:#000;font-weight:bold;transform:scaleX(1.020)">6/02/15</div></div>
<div class="c" style="left:673px;top:332.34px;width:70.79999999999995px;height:20.56px;"><div class="t" style="left:2.10px;top:3.86px;font-size:12.4px;line-height:14.88px;color:#000;font-weight:bold;transform:scaleX(0.857);-webkit-text-stroke:0.3px #000;">Thu</div><div class="t" style="left:25.80px;top:3.86px;font-size:12.4px;line-height:14.88px;color:#000;font-weight:bold;transform:scaleX(1.020)">12/03/15</div></div>
<div class="r" style="left:56px;top:352.9px;width:692px;height:20.560000000000002px;background:#f4b183;"></div>
<div class="r" style="left:24px;top:352.4px;width:32px;height:1.0px;background:#dcdcdc;"></div>
<div class="r" style="left:56px;top:352.3px;width:692px;height:1.1999999999999886px;background:#e0cfc4;"></div>
<div class="r" style="left:524px;top:352.9px;width:1.2000000000000455px;height:20.560000000000002px;background:#e0cfc4;"></div>
<div class="r" style="left:598px;top:352.9px;width:1.2000000000000455px;height:20.560000000000002px;background:#e0cfc4;"></div>
<div class="r" style="left:672px;top:352.9px;width:1.2000000000000455px;height:20.560000000000002px;background:#e0cfc4;"></div>
<div class="r" style="left:746px;top:352.9px;width:1.2000000000000455px;height:20.560000000000002px;background:#e0cfc4;"></div>
<div class="t" style="left:33.97px;top:355.69px;font-size:11px;line-height:13.20px;color:#6a666c;transform:scaleX(0.9200);">23</div>
<svg class="r" style="left:75.6px;top:359.30px" width="6" height="8" viewBox="0 0 6 8"><path d="M0.7 0.6L4.6 4L0.7 7.4Z" fill="#f4f4fb" stroke="#a9a9c4" stroke-width="0.7"/></svg>
<div class="c" style="left:56px;top:352.90px;width:468px;height:20.56px;"><div class="t" style="left:29.5px;top:3.86px;font-size:12.4px;line-height:14.88px;color:#000;font-weight:bold;transform:scaleX(1.0063)">Implement</div></div>
<div class="c" style="left:525px;top:352.90px;width:73px;height:20.56px;"><div class="t" style="left:1.3px;top:3.86px;font-size:12.4px;line-height:14.88px;color:#000;font-weight:bold;transform:scaleX(0.9074)">15 days?</div></div>
<div class="c" style="left:599px;top:352.90px;width:70.5px;height:20.56px;"><div class="t" style="left:2.10px;top:3.86px;font-size:12.4px;line-height:14.88px;color:#000;font-weight:bold;transform:scaleX(0.813);-webkit-text-stroke:0.3px #000;">Fri</div><div class="t" style="left:18.90px;top:3.86px;font-size:12.4px;line-height:14.88px;color:#000;font-weight:bold;transform:scaleX(1.020)">13/03/15</div></div>
<div class="c" style="left:673px;top:352.90px;width:70.79999999999995px;height:20.56px;"><div class="t" style="left:2.10px;top:3.86px;font-size:12.4px;line-height:14.88px;color:#000;font-weight:bold;transform:scaleX(0.857);-webkit-text-stroke:0.3px #000;">Thu</div><div class="t" style="left:25.80px;top:3.86px;font-size:12.4px;line-height:14.88px;color:#000;font-weight:bold;transform:scaleX(1.020)">2/04/15</div></div>
<div class="r" style="left:56px;top:373.46px;width:692px;height:20.560000000000002px;background:#f4b183;"></div>
<div class="r" style="left:24px;top:372.96px;width:32px;height:1.0px;background:#dcdcdc;"></div>
<div class="r" style="left:56px;top:372.86px;width:692px;height:1.1999999999999886px;background:#e0cfc4;"></div>
<div class="r" style="left:524px;top:373.46px;width:1.2000000000000455px;height:20.560000000000002px;background:#e0cfc4;"></div>
<div class="r" style="left:598px;top:373.46px;width:1.2000000000000455px;height:20.560000000000002px;background:#e0cfc4;"></div>
<div class="r" style="left:672px;top:373.46px;width:1.2000000000000455px;height:20.560000000000002px;background:#e0cfc4;"></div>
<div class="r" style="left:746px;top:373.46px;width:1.2000000000000455px;height:20.560000000000002px;background:#e0cfc4;"></div>
<div class="t" style="left:33.97px;top:376.25px;font-size:11px;line-height:13.20px;color:#6a666c;transform:scaleX(0.9200);">27</div>
<svg class="r" style="left:75.6px;top:379.86px" width="6" height="8" viewBox="0 0 6 8"><path d="M0.7 0.6L4.6 4L0.7 7.4Z" fill="#f4f4fb" stroke="#a9a9c4" stroke-width="0.7"/></svg>
<div class="c" style="left:56px;top:373.46px;width:468px;height:20.56px;"><div class="t" style="left:29.5px;top:3.86px;font-size:12.4px;line-height:14.88px;color:#000;font-weight:bold;transform:scaleX(0.9231)">Close</div></div>
<div class="c" style="left:525px;top:373.46px;width:73px;height:20.56px;"><div class="t" style="left:1.3px;top:3.86px;font-size:12.4px;line-height:14.88px;color:#000;font-weight:bold;transform:scaleX(0.9074)">15 days?</div></div>
<div class="c" style="left:599px;top:373.46px;width:70.5px;height:20.56px;"><div class="t" style="left:2.10px;top:3.86px;font-size:12.4px;line-height:14.88px;color:#000;font-weight:bold;transform:scaleX(0.813);-webkit-text-stroke:0.3px #000;">Fri</div><div class="t" style="left:18.90px;top:3.86px;font-size:12.4px;line-height:14.88px;color:#000;font-weight:bold;transform:scaleX(1.020)">3/04/15</div></div>
<div class="c" style="left:673px;top:373.46px;width:70.79999999999995px;height:20.56px;"><div class="t" style="left:2.10px;top:3.86px;font-size:12.4px;line-height:14.88px;color:#000;font-weight:bold;transform:scaleX(0.857);-webkit-text-stroke:0.3px #000;">Thu</div><div class="t" style="left:25.80px;top:3.86px;font-size:12.4px;line-height:14.88px;color:#000;font-weight:bold;transform:scaleX(1.020)">23/04/15</div></div>
<div class="r" style="left:56px;top:394.02px;width:692px;height:20.560000000000002px;background:#92d050;"></div>
<div class="r" style="left:24px;top:393.52px;width:32px;height:1.0px;background:#dcdcdc;"></div>
<div class="r" style="left:56px;top:393.42px;width:692px;height:1.1999999999999886px;background:#c7d7b7;"></div>
<div class="r" style="left:524px;top:394.02px;width:1.2000000000000455px;height:20.560000000000002px;background:#c7d7b7;"></div>
<div class="r" style="left:598px;top:394.02px;width:1.2000000000000455px;height:20.560000000000002px;background:#c7d7b7;"></div>
<div class="r" style="left:672px;top:394.02px;width:1.2000000000000455px;height:20.560000000000002px;background:#c7d7b7;"></div>
<div class="r" style="left:746px;top:394.02px;width:1.2000000000000455px;height:20.560000000000002px;background:#c7d7b7;"></div>
<div class="t" style="left:36.79px;top:396.81px;font-size:11px;line-height:13.20px;color:#6a666c;transform:scaleX(0.9200);">3</div>
<svg class="r" style="left:60.3px;top:401.42px" width="6" height="6" viewBox="0 0 6 6"><path d="M5.7 0V5.2H0.1Z" fill="#3f3f4a"/></svg>
<div class="c" style="left:56px;top:394.02px;width:468px;height:20.56px;"><div class="t" style="left:14.900000000000006px;top:3.61px;font-size:13.3px;line-height:15.96px;color:#000;font-weight:bold;transform:scaleX(0.9908)">New Product Launch</div></div>
<div class="c" style="left:525px;top:394.02px;width:73px;height:20.56px;"><div class="t" style="left:1.0px;top:3.61px;font-size:13.3px;line-height:15.96px;color:#000;font-weight:bold;transform:scaleX(0.9549)">19.86 days?</div></div>
<div class="c" style="left:599px;top:394.02px;width:70.5px;height:20.56px;"><div class="t" style="left:2.10px;top:3.61px;font-size:13.3px;line-height:15.96px;color:#000;font-weight:bold;transform:scaleX(0.946);">Tue</div><div class="t" style="left:28.03px;top:3.61px;font-size:13.3px;line-height:15.96px;color:#000;font-weight:bold;transform:scaleX(1.117)">1/03/05</div></div>
<div class="c" style="left:673px;top:394.02px;width:70.79999999999995px;height:20.56px;"><div class="t" style="left:2.10px;top:3.61px;font-size:13.3px;line-height:15.96px;color:#000;font-weight:bold;transform:scaleX(0.993);">Mon</div><div class="t" style="left:33.83px;top:3.61px;font-size:13.3px;line-height:15.96px;color:#000;font-weight:bold;transform:scaleX(1.117)">28/03/05</div></div>
<div class="r" style="left:56px;top:414.58px;width:692px;height:20.560000000000002px;background:#92d050;"></div>
<div class="r" style="left:24px;top:414.08px;width:32px;height:1.0px;background:#dcdcdc;"></div>
<div class="r" style="left:56px;top:413.98px;width:692px;height:1.1999999999999886px;background:#c7d7b7;"></div>
<div class="r" style="left:524px;top:414.58px;width:1.2000000000000455px;height:20.560000000000002px;background:#c7d7b7;"></div>
<div class="r" style="left:598px;top:414.58px;width:1.2000000000000455px;height:20.560000000000002px;background:#c7d7b7;"></div>
<div class="r" style="left:672px;top:414.58px;width:1.2000000000000455px;height:20.560000000000002px;background:#c7d7b7;"></div>
<div class="r" style="left:746px;top:414.58px;width:1.2000000000000455px;height:20.560000000000002px;background:#c7d7b7;"></div>
<div class="t" style="left:36.79px;top:417.37px;font-size:11px;line-height:13.20px;color:#6a666c;transform:scaleX(0.9200);">1</div>
<div class="c" style="left:56px;top:414.58px;width:468px;height:20.56px;"><div class="t" style="left:29.599999999999994px;top:3.56px;font-size:12.4px;line-height:14.88px;color:#000;transform:scaleX(1.0437)">Read the note for an explanation of the purpose of this template</div></div>
<div class="c" style="left:525px;top:414.58px;width:73px;height:20.56px;"><div class="t" style="left:1.2px;top:3.56px;font-size:12.4px;line-height:14.88px;color:#000;transform:scaleX(0.9400)">0 days</div></div>
<div class="c" style="left:599px;top:414.58px;width:70.5px;height:20.56px;"><div class="t" style="left:2.10px;top:3.56px;font-size:12.4px;line-height:14.88px;color:#000;transform:scaleX(0.901);">Tue</div><div class="t" style="left:25.65px;top:3.56px;font-size:12.4px;line-height:14.88px;color:#000;transform:scaleX(1.010)">1/03/05</div></div>
<div class="c" style="left:673px;top:414.58px;width:70.79999999999995px;height:20.56px;"><div class="t" style="left:2.10px;top:3.56px;font-size:12.4px;line-height:14.88px;color:#000;transform:scaleX(0.901);">Tue</div><div class="t" style="left:25.65px;top:3.56px;font-size:12.4px;line-height:14.88px;color:#000;transform:scaleX(1.010)">1/03/05</div></div>
<div class="r" style="left:56px;top:435.14px;width:692px;height:20.560000000000002px;background:#92d050;"></div>
<div class="r" style="left:24px;top:434.64px;width:32px;height:1.0px;background:#dcdcdc;"></div>
<div class="r" style="left:56px;top:434.54px;width:692px;height:1.1999999999999886px;background:#c7d7b7;"></div>
<div class="r" style="left:524px;top:435.14px;width:1.2000000000000455px;height:20.560000000000002px;background:#c7d7b7;"></div>
<div class="r" style="left:598px;top:435.14px;width:1.2000000000000455px;height:20.560000000000002px;background:#c7d7b7;"></div>
<div class="r" style="left:672px;top:435.14px;width:1.2000000000000455px;height:20.560000000000002px;background:#c7d7b7;"></div>
<div class="r" style="left:746px;top:435.14px;width:1.2000000000000455px;height:20.560000000000002px;background:#c7d7b7;"></div>
<div class="t" style="left:36.79px;top:437.93px;font-size:11px;line-height:13.20px;color:#6a666c;transform:scaleX(0.9200);">2</div>
<svg class="r" style="left:75.6px;top:441.54px" width="6" height="8" viewBox="0 0 6 8"><path d="M0.7 0.6L4.6 4L0.7 7.4Z" fill="#f4f4fb" stroke="#a9a9c4" stroke-width="0.7"/></svg>
<div class="c" style="left:56px;top:435.14px;width:468px;height:20.56px;"><div class="t" style="left:29.5px;top:3.86px;font-size:12.4px;line-height:14.88px;color:#000;font-weight:bold;transform:scaleX(0.9384)">Phase 1 - Planning</div></div>
<div class="c" style="left:525px;top:435.14px;width:73px;height:20.56px;"><div class="t" style="left:1.3px;top:3.86px;font-size:12.4px;line-height:14.88px;color:#000;font-weight:bold;transform:scaleX(0.9074)">6.86 days?</div></div>
<div class="c" style="left:599px;top:435.14px;width:70.5px;height:20.56px;"><div class="t" style="left:2.10px;top:3.86px;font-size:12.4px;line-height:14.88px;color:#000;font-weight:bold;transform:scaleX(0.927);">Tue</div><div class="t" style="left:25.80px;top:3.86px;font-size:12.4px;line-height:14.88px;color:#000;font-weight:bold;transform:scaleX(1.020)">1/03/05</div></div>
<div class="c" style="left:673px;top:435.14px;width:70.79999999999995px;height:20.56px;"><div class="t" style="left:2.10px;top:3.86px;font-size:12.4px;line-height:14.88px;color:#000;font-weight:bold;transform:scaleX(1.024);">Wed</div><div class="t" style="left:32.20px;top:3.86px;font-size:12.4px;line-height:14.88px;color:#000;font-weight:bold;transform:scaleX(1.020)">9/03/05</div></div>
<div class="r" style="left:56px;top:455.7px;width:692px;height:20.560000000000002px;background:#92d050;"></div>
<div class="r" style="left:24px;top:455.2px;width:32px;height:1.0px;background:#dcdcdc;"></div>
<div class="r" style="left:56px;top:455.1px;width:692px;height:1.1999999999999886px;background:#c7d7b7;"></div>
<div class="r" style="left:524px;top:455.7px;width:1.2000000000000455px;height:20.560000000000002px;background:#c7d7b7;"></div>
<div class="r" style="left:598px;top:455.7px;width:1.2000000000000455px;height:20.560000000000002px;background:#c7d7b7;"></div>
<div class="r" style="left:672px;top:455.7px;width:1.2000000000000455px;height:20.560000000000002px;background:#c7d7b7;"></div>
<div class="r" style="left:746px;top:455.7px;width:1.2000000000000455px;height:20.560000000000002px;background:#c7d7b7;"></div>
<div class="t" style="left:33.97px;top:458.49px;font-size:11px;line-height:13.20px;color:#6a666c;transform:scaleX(0.9200);">14</div>
<svg class="r" style="left:75.6px;top:462.10px" width="6" height="8" viewBox="0 0 6 8"><path d="M0.7 0.6L4.6 4L0.7 7.4Z" fill="#f4f4fb" stroke="#a9a9c4" stroke-width="0.7"/></svg>
<div class="c" style="left:56px;top:455.70px;width:468px;height:20.56px;"><div class="t" style="left:29.5px;top:3.86px;font-size:12.4px;line-height:14.88px;color:#000;font-weight:bold;transform:scaleX(0.9568)">Phase 2 - Initiation</div></div>
<div class="c" style="left:525px;top:455.70px;width:73px;height:20.56px;"><div class="t" style="left:1.3px;top:3.86px;font-size:12.4px;line-height:14.88px;color:#000;font-weight:bold;transform:scaleX(0.9074)">6 days?</div></div>
<div class="c" style="left:599px;top:455.70px;width:70.5px;height:20.56px;"><div class="t" style="left:2.10px;top:3.86px;font-size:12.4px;line-height:14.88px;color:#000;font-weight:bold;transform:scaleX(1.024);">Wed</div><div class="t" style="left:32.20px;top:3.86px;font-size:12.4px;line-height:14.88px;color:#000;font-weight:bold;transform:scaleX(1.020)">9/03/05</div></div>
<div class="c" style="left:673px;top:455.70px;width:70.79999999999995px;height:20.56px;"><div class="t" style="left:2.10px;top:3.86px;font-size:12.4px;line-height:14.88px;color:#000;font-weight:bold;transform:scaleX(0.857);-webkit-text-stroke:0.3px #000;">Thu</div><div class="t" style="left:25.80px;top:3.86px;font-size:12.4px;line-height:14.88px;color:#000;font-weight:bold;transform:scaleX(1.020)">17/03/05</div></div>
<div class="r" style="left:56px;top:476.26px;width:692px;height:20.560000000000002px;background:#92d050;"></div>
<div class="r" style="left:24px;top:475.76px;width:32px;height:1.0px;background:#dcdcdc;"></div>
<div class="r" style="left:56px;top:475.66px;width:692px;height:1.1999999999999886px;background:#c7d7b7;"></div>
<div class="r" style="left:524px;top:476.26px;width:1.2000000000000455px;height:20.560000000000002px;background:#c7d7b7;"></div>
<div class="r" style="left:598px;top:476.26px;width:1.2000000000000455px;height:20.560000000000002px;background:#c7d7b7;"></div>
<div class="r" style="left:672px;top:476.26px;width:1.2000000000000455px;height:20.560000000000002px;background:#c7d7b7;"></div>
<div class="r" style="left:746px;top:476.26px;width:1.2000000000000455px;height:20.560000000000002px;background:#c7d7b7;"></div>
<div class="t" style="left:33.97px;top:479.05px;font-size:11px;line-height:13.20px;color:#6a666c;transform:scaleX(0.9200);">38</div>
<svg class="r" style="left:75.6px;top:482.66px" width="6" height="8" viewBox="0 0 6 8"><path d="M0.7 0.6L4.6 4L0.7 7.4Z" fill="#f4f4fb" stroke="#a9a9c4" stroke-width="0.7"/></svg>
<div class="c" style="left:56px;top:476.26px;width:468px;height:20.56px;"><div class="t" style="left:29.5px;top:3.86px;font-size:12.4px;line-height:14.88px;color:#000;font-weight:bold;transform:scaleX(0.9302)">Phase 3 - Execution</div></div>
<div class="c" style="left:525px;top:476.26px;width:73px;height:20.56px;"><div class="t" style="left:1.3px;top:3.86px;font-size:12.4px;line-height:14.88px;color:#000;font-weight:bold;transform:scaleX(0.9074)">4 days?</div></div>
<div class="c" style="left:599px;top:476.26px;width:70.5px;height:20.56px;"><div class="t" style="left:2.10px;top:3.86px;font-size:12.4px;line-height:14.88px;color:#000;font-weight:bold;transform:scaleX(0.857);-webkit-text-stroke:0.3px #000;">Thu</div><div class="t" style="left:25.80px;top:3.86px;font-size:12.4px;line-height:14.88px;color:#000;font-weight:bold;transform:scaleX(1.020)">17/03/05</div></div>
<div class="c" style="left:673px;top:476.26px;width:70.79999999999995px;height:20.56px;"><div class="t" style="left:2.10px;top:3.86px;font-size:12.4px;line-height:14.88px;color:#000;font-weight:bold;transform:scaleX(1.024);">Wed</div><div class="t" style="left:32.20px;top:3.86px;font-size:12.4px;line-height:14.88px;color:#000;font-weight:bold;transform:scaleX(1.020)">23/03/05</div></div>
<div class="r" style="left:56px;top:496.82px;width:692px;height:20.560000000000002px;background:#92d050;"></div>
<div class="r" style="left:24px;top:496.32px;width:32px;height:1.0px;background:#dcdcdc;"></div>
<div class="r" style="left:56px;top:496.22px;width:692px;height:1.1999999999999886px;background:#c7d7b7;"></div>
<div class="r" style="left:524px;top:496.82px;width:1.2000000000000455px;height:20.560000000000002px;background:#c7d7b7;"></div>
<div class="r" style="left:598px;top:496.82px;width:1.2000000000000455px;height:20.560000000000002px;background:#c7d7b7;"></div>
<div class="r" style="left:672px;top:496.82px;width:1.2000000000000455px;height:20.560000000000002px;background:#c7d7b7;"></div>
<div class="r" style="left:746px;top:496.82px;width:1.2000000000000455px;height:20.560000000000002px;background:#c7d7b7;"></div>
<div class="t" style="left:33.97px;top:499.61px;font-size:11px;line-height:13.20px;color:#6a666c;transform:scaleX(0.9200);">64</div>
<svg class="r" style="left:75.6px;top:503.22px" width="6" height="8" viewBox="0 0 6 8"><path d="M0.7 0.6L4.6 4L0.7 7.4Z" fill="#f4f4fb" stroke="#a9a9c4" stroke-width="0.7"/></svg>
<div class="c" style="left:56px;top:496.82px;width:468px;height:20.56px;"><div class="t" style="left:29.5px;top:3.86px;font-size:12.4px;line-height:14.88px;color:#000;font-weight:bold;transform:scaleX(0.9514)">Phase 4 - Release To Manufacture</div></div>
<div class="c" style="left:525px;top:496.82px;width:73px;height:20.56px;"><div class="t" style="left:1.3px;top:3.86px;font-size:12.4px;line-height:14.88px;color:#000;font-weight:bold;transform:scaleX(0.9074)">3 days?</div></div>
<div class="c" style="left:599px;top:496.82px;width:70.5px;height:20.56px;"><div class="t" style="left:2.10px;top:3.86px;font-size:12.4px;line-height:14.88px;color:#000;font-weight:bold;transform:scaleX(1.024);">Wed</div><div class="t" style="left:32.20px;top:3.86px;font-size:12.4px;line-height:14.88px;color:#000;font-weight:bold;transform:scaleX(1.020)">23/03/05</div></div>
<div class="c" style="left:673px;top:496.82px;width:70.79999999999995px;height:20.56px;"><div class="t" style="left:2.10px;top:3.86px;font-size:12.4px;line-height:14.88px;color:#000;font-weight:bold;transform:scaleX(0.973);">Mon</div><div class="t" style="left:31.10px;top:3.86px;font-size:12.4px;line-height:14.88px;color:#000;font-weight:bold;transform:scaleX(1.020)">28/03/05</div></div>
<div class="r" style="left:56px;top:147.5px;width:1px;height:369.5px;background:rgba(170,170,170,0.75);"></div>
<div class="t" style="left:12.8px;top:376.8px;font-size:11.8px;line-height:12px;color:#2f7a30;transform:translate(-50%,-50%) rotate(-90deg) scaleX(0.9870);transform-origin:center;">GANTT CHART</div>
<svg class="r" style="left:0;top:0" width="750" height="518" viewBox="0 0 750 518"><path d="M0 0H750V518H0Z M1.1 1.6V516.8H748.4V1.6Z" fill="#000" fill-rule="evenodd"/></svg>
</div></body></html>
